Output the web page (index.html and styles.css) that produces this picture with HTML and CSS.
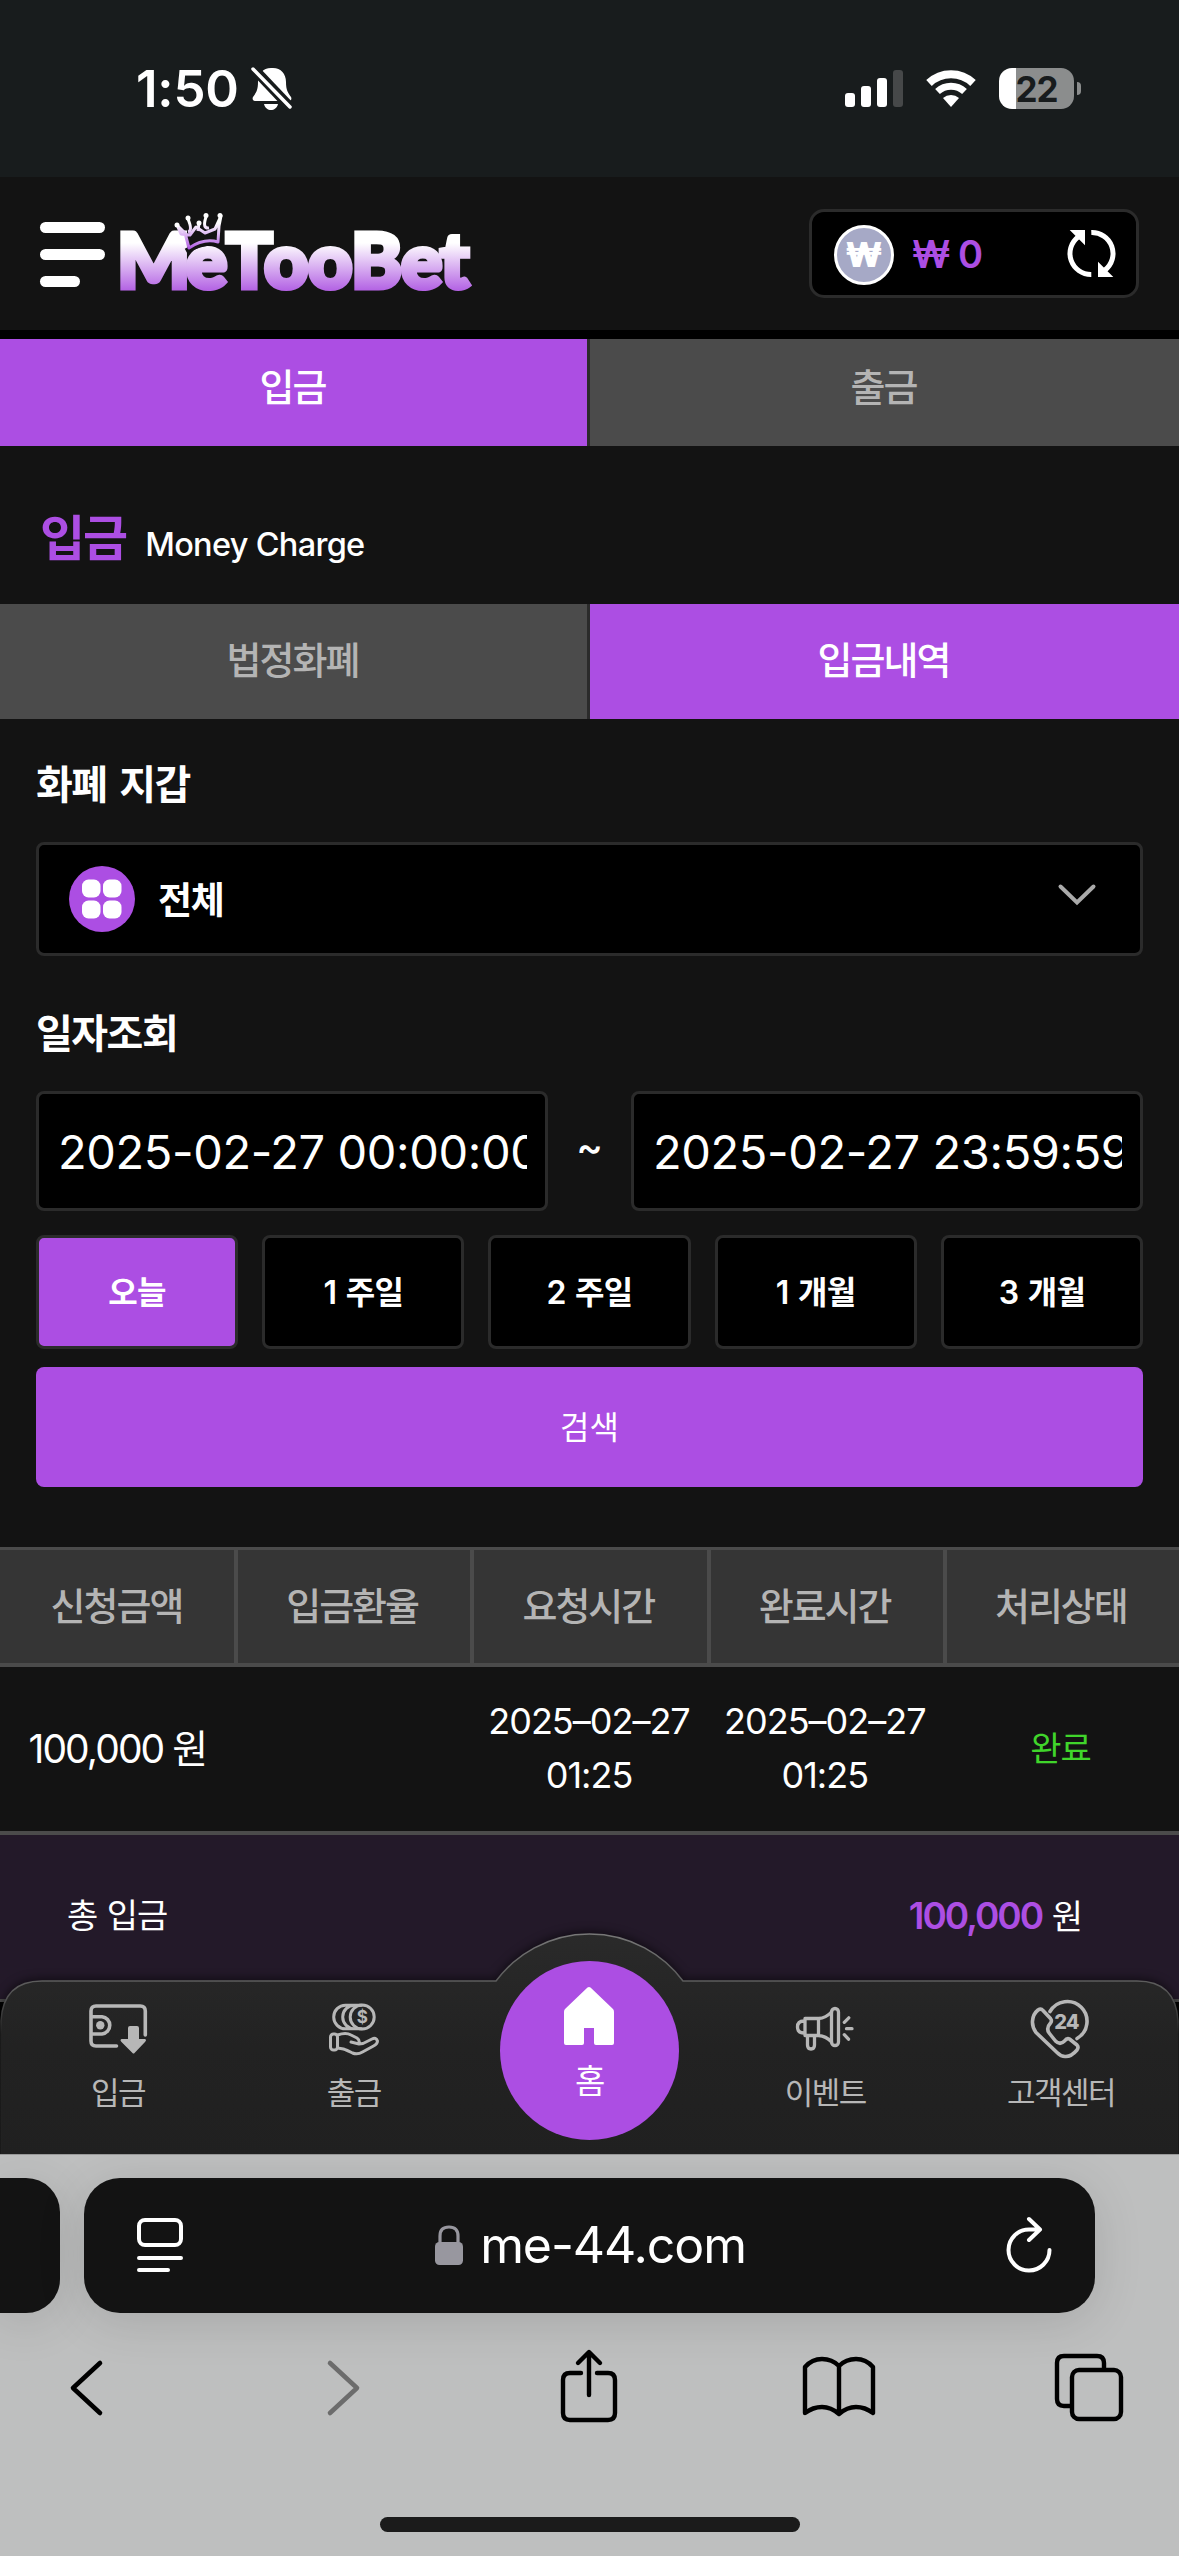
FILE: index.html
```html
<!DOCTYPE html>
<html lang="ko">
<head>
<meta charset="UTF-8">
<meta name="viewport" content="width=device-width, initial-scale=1.0">
<title>MeTooBet</title>
<link rel="stylesheet" href="styles.css">
</head>
<body>
    <div class="status-bar">
        <div class="status-left">
            <span class="clock">1:50</span>
            <svg width="42" height="46" viewBox="0 0 42 46">
                <path d="M20 3c-8 0-13 6-13 14 0 8-2 11-5 15-1 2 0 4 2 4h34c2 0 3-2 2-4-3-4-5-7-5-15 0-8-5-14-13-14zM13 39h14c-1 4-4 6-7 6s-6-2-7-6z" fill="#fff"/>
                <path d="M1 2l38 40" stroke="#181c1d" stroke-width="10"/>
                <path d="M2 4l37 38" stroke="#fff" stroke-width="3.5" stroke-linecap="round"/>
            </svg>
        </div>
        <div class="status-right">
            <svg width="58" height="38" viewBox="0 0 58 38">
                <rect x="0" y="24" width="10" height="14" rx="3" fill="#fff"/>
                <rect x="16" y="17" width="10" height="21" rx="3" fill="#fff"/>
                <rect x="32" y="9" width="10" height="29" rx="3" fill="#fff"/>
                <rect x="48" y="1" width="10" height="37" rx="3" fill="#464849"/>
            </svg>
            <svg width="52" height="38" viewBox="0 0 52 38">
                <path d="M4 14a32 32 0 0 1 44 0" fill="none" stroke="#fff" stroke-width="8"/>
                <path d="M12.500 22.500a20 20 0 0 1 27 0" fill="none" stroke="#fff" stroke-width="7"/>
                <path d="M26 38l-8-9a12 12 0 0 1 16 0z" fill="#fff"/>
            </svg>
            <div class="battery"><span>22</span></div>
            <i class="battery-tip"></i>
        </div>
    </div>

    <div class="header">
        <div class="menu"><i></i><i></i><i></i></div>
        <svg class="logo" width="360" height="100" viewBox="0 0 360 100">
            <defs>
                <linearGradient id="logoFill" gradientUnits="userSpaceOnUse" x1="0" y1="34" x2="0" y2="88">
                    <stop offset="0" stop-color="#fff"/>
                    <stop offset="1" stop-color="#a94de0"/>
                </linearGradient>
                <linearGradient id="crownFill" gradientUnits="userSpaceOnUse" x1="0" y1="14" x2="0" y2="42">
                    <stop offset="0" stop-color="#fff"/>
                    <stop offset="1" stop-color="#a94de0"/>
                </linearGradient>
            </defs>
            <text class="logo-text" x="2 71 111 149 193 236 286 325" y="79" fill="url(#logoFill)" stroke="url(#logoFill)">MeTooBet</text>
            <path d="M71 42q19-11 36-7" fill="none" stroke="#131313" stroke-width="5"/>
            <g fill="none" stroke="url(#crownFill)" stroke-width="3" stroke-linejoin="round">
                <path d="M62 16l8 8 4 15q15-10 29-6l1-16 2-10-6 13-10 4-9-6-6 8-9-1z"/>
                <path d="M73 10q5 12 0 13M91 8q-4 12 3 11M84 14l-1 8"/>
            </g>
            <g fill="#fff">
                <circle cx="62" cy="16" r="2.500"/><circle cx="73" cy="9" r="2.500"/><circle cx="84" cy="14" r="2.500"/><circle cx="91" cy="6.500" r="2.500"/><circle cx="105" cy="6.500" r="2.500"/>
            </g>
        </svg>
        <div class="balance">
            <span class="coin">₩</span>
            <span class="amount">₩ 0</span>
            <svg width="49" height="49" viewBox="0 0 49 49">
                <path d="M11 8a21 21 0 0 0 13.300 37.500M24.300 3.500A21 21 0 0 1 38 41" fill="none" stroke="#fff" stroke-width="5"/>
                <path d="M2.700 1H18v15.300zM31 32.700V48h15.300z" fill="#fff"/>
            </svg>
        </div>
    </div>

    <div class="content">
        <div class="tabs top-tabs">
            <div class="tab active">입금</div>
            <div class="tab">출금</div>
        </div>
        <div class="page-title">
            <h1>입금</h1>
            <span>Money Charge</span>
        </div>
        <div class="tabs">
            <div class="tab">법정화폐</div>
            <div class="tab active">입금내역</div>
        </div>

        <div class="search-form">
            <label class="label">화폐 지갑</label>
            <div class="select">
                <svg width="66" height="66" viewBox="0 0 66 66">
                    <circle cx="33" cy="33" r="33" fill="#ac4ee3"/>
                    <g fill="#fff"><rect x="13" y="13.500" width="18.500" height="18" rx="6.500"/><rect x="34" y="13.500" width="18.500" height="18" rx="6.500"/><rect x="13" y="34.500" width="18.500" height="18" rx="6.500"/><rect x="34" y="34.500" width="18.500" height="18" rx="6.500"/></g>
                </svg>
                <span>전체</span>
                <svg class="chevron" width="38" height="22" viewBox="0 0 38 22"><path d="M2.500 2.500L19 18.500 35.500 2.500" fill="none" stroke="#aaa" stroke-width="4" stroke-linecap="round"/></svg>
            </div>
            <label class="label date-label">일자조회</label>
            <div class="date-row">
                <input type="text" value="2025-02-27 00:00:00">
                <span>~</span>
                <input type="text" value="2025-02-27 23:59:59">
            </div>
            <div class="range-row">
                <button class="range active">오늘</button>
                <button class="range">1 주일</button>
                <button class="range">2 주일</button>
                <button class="range">1 개월</button>
                <button class="range">3 개월</button>
            </div>
            <button class="search-btn">검색</button>
        </div>

        <div class="history">
            <div class="row head">
                <div>신청금액</div><div>입금환율</div><div>요청시간</div><div>완료시간</div><div>처리상태</div>
            </div>
            <div class="row">
                <div class="money">100,000 원</div>
                <div></div>
                <div>2025–02–27<br>01:25</div>
                <div>2025–02–27<br>01:25</div>
                <div class="done">완료</div>
            </div>
            <div class="total">
                <span>총 입금</span>
                <span><b>100,000</b> 원</span>
            </div>
        </div>

        <div class="bottom-nav">
            <svg class="nav-bg" width="1179" height="230" viewBox="0 0 1179 230">
                <defs>
                    <linearGradient id="navFill" x1="0" y1="0" x2="0" y2="1">
                        <stop offset="0" stop-color="#2a2a2a"/>
                        <stop offset="0.500" stop-color="#222"/>
                        <stop offset="1" stop-color="#202020"/>
                    </linearGradient>
                    <linearGradient id="navLine" gradientUnits="userSpaceOnUse" x1="0" y1="10" x2="0" y2="110">
                        <stop offset="0" stop-color="#777"/>
                        <stop offset="0.600" stop-color="#555"/>
                        <stop offset="1" stop-color="#222"/>
                    </linearGradient>
                </defs>
                <path class="nav-shape" d="M1 235V97Q3 57 42 57H496A116.500 116.500 0 0 1 683 57H1137Q1176 57 1178 97V235z" fill="url(#navFill)" stroke="url(#navLine)" stroke-width="1.500"/>
            </svg>
            <div class="nav-items">
                <div class="nav-item">
                    <svg width="60" height="56" viewBox="0 0 60 56" fill="none" stroke="#b7b7b7" stroke-width="3.600" stroke-linecap="round">
                        <path d="M57.300 33V9q0-5-5-5H8Q3 4 3 9v30q0 5 5 5h20.500M3 14.700h11a8.700 8.700 0 0 1 0 17.300H3"/>
                        <circle cx="12.300" cy="23.300" r="4.200" fill="#b7b7b7" stroke="none"/>
                        <path d="M42 24h7q2 0 2 2v11h6q2 1 0 3L46.500 51q-1 1-2 0L33.500 40q-2-2 0-3H40V26q0-2 2-2z" fill="#b7b7b7" stroke="none"/>
                    </svg>
                    <span>입금</span>
                </div>
                <div class="nav-item">
                    <svg width="52" height="56" viewBox="0 0 52 56" fill="none" stroke="#b7b7b7" stroke-width="3" stroke-linejoin="round" stroke-linecap="round">
                        <circle cx="34.200" cy="15" r="12"/>
                        <path d="M26.500 3.200a11.800 11.800 0 0 0 0 23.600M17.500 3.200a11.800 11.800 0 0 0 0 23.600M17.500 3.200h16M17.500 26.800h16"/>
                        <rect x="2.500" y="32" width="7" height="16" rx="3"/>
                        <path d="M9.500 33Q18 30 23 33L29 36Q32 38 31 42L23 40M31 42l4-.500L44 37q4-2 5.500 2 0 3-4 5l-11 6q-5 3-10 1-6-3-9-4l-6-1"/>
                        <text x="34.200" y="21.200" class="dollar">$</text>
                    </svg>
                    <span>출금</span>
                </div>
                <div class="nav-item home">
                    <div class="home-circle">
                        <svg width="52" height="60" viewBox="0 0 52 60"><path d="M24.500 1.500q1.500-1 3 0L50 23q1 1 1 3v31q0 2-2 2H33q-2 0-2-2V42H21v15q0 2-2 2H3q-2 0-2-2V26q0-2 1-3z" fill="#fff"/></svg>
                        <span>홈</span>
                    </div>
                </div>
                <div class="nav-item">
                    <svg width="60" height="56" viewBox="0 -4 60 56" fill="none" stroke="#b7b7b7" stroke-width="3.300" stroke-linejoin="round" stroke-linecap="round">
                        <path d="M9 15Q2.500 15 2.500 21T9 27M10 12.500h13.500v17H10zM23.500 12.500Q31 12 36.500 6M23.500 29.500Q31 30 36.500 36"/>
                        <rect x="36.500" y="2.500" width="7" height="37" rx="3.500"/>
                        <path d="M12.500 30v9q0 4 3.500 4t3.500-4v-9M49.300 16.300l4.500-4.500M51.500 22.700h5.500M49.300 28.700l4.200 4.500"/>
                    </svg>
                    <span>이벤트</span>
                </div>
                <div class="nav-item support-item">
                    <svg width="58" height="60" viewBox="0 0 58 60" fill="none" stroke="#b7b7b7" stroke-width="3.600" stroke-linejoin="round" stroke-linecap="round">
                        <path d="M20 11.500a19.800 19.800 0 1 1 27 27"/>
                        <path d="M13 10.500l7.500 8q1.800 2.300 0 4.500-5 5.500-1 10.500l6 7.500q4.500 4.500 9 0 2.500-3.500 5-2l7.500 6q2 2 0 5-6 7-12 6.500-4 0-8-4L6 32.500Q2 27 2.500 21 3 14 8 10q3-2 5 .500z"/>
                        <text x="36.300" y="29" class="support">24</text>
                    </svg>
                    <span>고객센터</span>
                </div>
            </div>
        </div>
    </div>

    <div class="browser">
        <div class="url-row">
            <div class="prev-tab"></div>
            <div class="url-bar">
                <svg width="46" height="54" viewBox="0 0 46 54" fill="none" stroke="#fff" stroke-width="4" stroke-linecap="round"><rect x="2" y="2" width="42" height="25" rx="6"/><path d="M2 40h42M2 52h29"/></svg>
                <div class="host">
                    <svg width="28" height="40" viewBox="0 0 28 40"><path d="M5 20v-9q0-9 9-9t9 9v9" fill="none" stroke="#98979f" stroke-width="3.200"/><rect y="17" width="28" height="23" rx="4.500" fill="#98979f"/></svg>
                    <span>me-44.com</span>
                </div>
                <svg width="46" height="56" viewBox="0 0 46 56" fill="none" stroke="#fff" stroke-width="4" stroke-linecap="round" stroke-linejoin="round"><path d="M43.500 33A20.500 20.500 0 1 1 23 12.500h10M23 2l11 10.500L23 23"/></svg>
            </div>
        </div>
        <div class="toolbar">
            <svg width="72" height="76" viewBox="0 0 72 76" fill="none" stroke="#000" stroke-width="4.600" stroke-linecap="round" stroke-linejoin="round"><path d="M49 14L22 39l27 25"/></svg>
            <svg width="72" height="76" viewBox="0 0 72 76" fill="none" stroke="#6c6c6c" stroke-width="4.600" stroke-linecap="round" stroke-linejoin="round"><path d="M28 14l27 25-27 25"/></svg>
            <svg width="72" height="76" viewBox="-1 0 72 76" fill="none" stroke="#000" stroke-width="4.400" stroke-linecap="round" stroke-linejoin="round"><path d="M28 24H17q-7 0-7 7v33q0 7 7 7h38q7 0 7-7V31q0-7-7-7H44M36 46V4M25 14L36 3l11 11"/></svg>
            <svg width="72" height="76" viewBox="0 0 72 76" fill="none" stroke="#000" stroke-width="4.400" stroke-linecap="round" stroke-linejoin="round"><path d="M36 17Q29 10 19 10T2 18v46Q10 58 19 58t17 7q8-7 17-7t17 6V18Q63 10 53 10T36 17zv48"/></svg>
            <svg width="72" height="76" viewBox="1 0 72 76" fill="none" stroke="#000" stroke-width="4.400" stroke-linejoin="round"><path d="M52 21v-7q0-7-7-7H12q-7 0-7 7v36q0 7 7 7h8"/><rect x="20" y="21" width="49" height="49" rx="7"/></svg>
        </div>
        <div class="home-indicator"></div>
    </div>
</body>
</html>
```

FILE: styles.css
```css
* {
    box-sizing: border-box;
}

body {
    margin: 0;
    width: 1179px;
    height: 2556px;
    overflow: hidden;
    background-color: #131313;
    color: #fff;
    font-family: Inter, "Noto Sans CJK KR", sans-serif;
}

svg {
    display: block;
    flex: none;
    overflow: visible;
}

/* status bar */
.status-bar {
    display: flex;
    justify-content: space-between;
    height: 177px;
    padding: 66px 98px 0 136px;
    background-color: #181c1d;
}

.status-left,
.status-right {
    display: flex;
    align-items: center;
    height: 44px;
}

.clock {
    width: 115px;
    font-size: 51px;
    font-weight: 600;
    letter-spacing: -0.2px;
}

.status-right svg {
    margin-right: 22px;
}

.battery {
    width: 75px;
    height: 41px;
    border-radius: 13px;
    background: linear-gradient(90deg, #fff 17px, #8b8d8d 17px);
    color: #181c1d;
    font-size: 35px;
    font-weight: 700;
    line-height: 42px;
    text-align: center;
    letter-spacing: -1px;
}

.battery-tip {
    width: 4px;
    height: 13px;
    margin-left: 3px;
    border-radius: 0 6px 6px 0;
    background-color: #8b8d8d;
}

/* header */
.header {
    display: flex;
    align-items: flex-start;
    height: 162px;
    padding: 32px 40px 0;
    border-bottom: 9px solid #000;
}

.menu {
    display: flex;
    flex-direction: column;
    gap: 16px;
    width: 65px;
    margin: 13px 10px 0 0;
}

.menu i {
    height: 11px;
    border-radius: 6px;
    background-color: #fff;
}

.menu i:last-child {
    width: 40px;
}

.logo-text {
    font-family: Lato, sans-serif;
    font-size: 77px;
    font-weight: 900;
    stroke-width: 5px;
}

.balance {
    display: flex;
    align-items: center;
    width: 330px;
    height: 89px;
    margin-left: auto;
    padding: 0 20px 0 22px;
    border: 3px solid #2b2b2b;
    border-radius: 15px;
    background-color: #000;
}

.coin {
    width: 60px;
    height: 60px;
    margin-top: 3px;
    border: 3px solid #fff;
    border-radius: 50%;
    background-color: #a6a9c6;
    font-size: 34px;
    font-weight: 900;
    line-height: 54px;
    text-align: center;
}

.amount {
    flex: 1;
    margin-left: 18px;
    color: #ac4ee3;
    font-size: 38px;
    font-weight: 600;
    line-height: 82px;
    letter-spacing: -1px;
}

/* tabs */
.content {
    position: relative;
    height: 1815px;
    overflow: hidden;
}

.tabs {
    display: flex;
    height: 115px;
}

.top-tabs {
    height: 107px;
}

.tab {
    flex: 1;
    background-color: #4b4b4b;
    color: #b4b4b4;
    font-size: 38px;
    font-weight: 500;
    letter-spacing: -2px;
    line-height: 113px;
    text-align: center;
}

.top-tabs .tab {
    line-height: 97px;
}

.tab:first-child {
    flex: 0 0 590px;
    padding-right: 2px;
    border-right: 3px solid #2b2b2b;
}

.tab:last-child {
    padding-right: 2px;
}

.tab.active {
    background-color: #ac4ee3;
    color: #fff;
}

.page-title {
    display: flex;
    align-items: baseline;
    gap: 19px;
    height: 158px;
    padding: 53px 40px 0;
}

.page-title h1 {
    margin: 0;
    color: #ac4ee3;
    font-size: 49px;
    font-weight: 600;
    letter-spacing: -2px;
    line-height: 80px;
}

.page-title span {
    font-size: 32.5px;
    font-weight: 500;
    letter-spacing: -0.7px;
}

/* search form */
.search-form {
    height: 828px;
    padding: 0 36px;
}

.label {
    display: block;
    height: 123px;
    padding-top: 41px;
    font-size: 40px;
    font-weight: 600;
    letter-spacing: -1.5px;
    word-spacing: 4px;
    line-height: 50px;
}

.date-label {
    height: 135px;
    padding-top: 53px;
}

.select {
    display: flex;
    align-items: center;
    height: 114px;
    padding: 0 44px 0 30px;
    border: 3px solid #2b2b2b;
    border-radius: 8px;
    background-color: #000;
    font-size: 37px;
    font-weight: 600;
    letter-spacing: -1.2px;
}

.select span {
    flex: 1;
    margin-left: 23px;
    padding-bottom: 3px;
}

.chevron {
    margin-bottom: 9px;
}

.date-row {
    display: flex;
    align-items: center;
}

.date-row input {
    width: 512px;
    height: 120px;
    padding: 1px 18px 0 19px;
    border: 3px solid #2b2b2b;
    border-radius: 8px;
    background-color: #000;
    color: #fff;
    font-family: inherit;
    font-size: 47px;
    letter-spacing: -0.4px;
}

.date-row span {
    flex: 1;
    padding-bottom: 9px;
    font-size: 40px;
    font-weight: 500;
    text-align: center;
}

.range-row {
    display: flex;
    gap: 24px;
    margin: 24px 0 18px;
}

.range {
    flex: 1;
    height: 114px;
    padding: 0 0 4px;
    border: 3px solid #2b2b2b;
    border-radius: 8px;
    background-color: #000;
    color: #fff;
    font-family: inherit;
    font-size: 32px;
    font-weight: 600;
    letter-spacing: -0.7px;
    word-spacing: 2px;
}

.range.active {
    background-color: #ac4ee3;
}

.search-btn {
    width: 100%;
    height: 120px;
    padding: 0 0 4px;
    border: none;
    border-radius: 8px;
    background-color: #ac4ee3;
    color: #fff;
    font-family: inherit;
    font-size: 32px;
}

/* deposit history */
.row {
    display: flex;
    align-items: center;
    height: 168px;
    padding-bottom: 2px;
    border-bottom: 4px solid #4b4b4b;
    font-size: 36px;
    letter-spacing: -1px;
    line-height: 54px;
}

.row div {
    flex: 1;
    padding-right: 1px;
    text-align: center;
}

.row .money {
    padding: 2px 1px 0 0;
    font-size: 39px;
    white-space: nowrap;
    letter-spacing: -1.9px;
}

.row .done {
    padding-top: 2px;
    color: #40d52b;
    font-size: 34px;
}

.row.head {
    align-items: stretch;
    height: 120px;
    padding: 0;
    border-top: 3px solid #4b4b4b;
    background-color: #353535;
    color: #b4b4b4;
    font-size: 38px;
    font-weight: 500;
    letter-spacing: -2px;
    line-height: 113px;
}

.head div + div {
    padding-right: 4px;
    border-left: 4px solid #4b4b4b;
}

.head div:first-child {
    flex: 0 0 234px;
}

.total {
    display: flex;
    justify-content: space-between;
    height: 167px;
    padding: 0 97px 0 67px;
    border-bottom: 3px solid #4b4b4b;
    background-color: #231929;
    font-size: 34px;
    letter-spacing: -1px;
    word-spacing: 1px;
    line-height: 162px;
}

.total b {
    color: #ac4ee3;
    font-size: 37px;
    font-weight: 600;
    letter-spacing: -2px;
}

.history {
    height: 700px;
    background-color: #000;
}

.history .row:not(.head) {
    background-color: #131313;
}

/* fixed bottom navigation, lies over the page */
.bottom-nav {
    position: absolute;
    left: 0;
    bottom: 0;
    width: 100%;
    height: 230px;
}

.nav-bg {
    position: absolute;
    top: 0;
    left: 0;
}

.nav-shape {
    filter: drop-shadow(0 -2px 4px rgba(0, 0, 0, 0.5));
}

.nav-items {
    position: relative;
    display: flex;
    height: 100%;
}

.nav-item {
    flex: 1;
    display: flex;
    flex-direction: column;
    align-items: center;
    padding-top: 78px;
    color: #b7b7b7;
    font-size: 31px;
    letter-spacing: -1.5px;
    line-height: 44px;
}

.nav-item > span {
    margin-top: auto;
    margin-bottom: 39px;
}

.support-item {
    padding-top: 76px;
}

.support-item svg {
    margin-right: 4px;
}

.home {
    padding-top: 37px;
}

.home-circle {
    display: flex;
    flex-direction: column;
    align-items: center;
    width: 179px;
    height: 179px;
    padding-top: 25px;
    border-radius: 50%;
    background-color: #ac4ee3;
    color: #fff;
}

.home-circle span {
    margin-top: 13px;
    font-size: 33px;
}

.dollar,
.support {
    fill: #b7b7b7;
    stroke: none;
    font-size: 17px;
    font-weight: 700;
    letter-spacing: 0;
    text-anchor: middle;
}

.support {
    font-size: 20px;
    font-weight: 800;
    letter-spacing: -1px;
}

/* browser bars */
.browser {
    display: flex;
    flex-direction: column;
    align-items: center;
    height: 402px;
    padding-top: 23px;
    border-top: 1px solid #999;
    background-color: #bebfbf;
}

.url-row {
    display: flex;
    gap: 24px;
    width: 100%;
}

.prev-tab {
    width: 60px;
    height: 135px;
    border-radius: 0 34px 34px 0;
    background-color: #131313;
    box-shadow: 0 8px 50px rgba(0, 0, 0, 0.12);
}

.url-bar {
    display: flex;
    align-items: center;
    justify-content: space-between;
    width: 1011px;
    height: 135px;
    padding: 0 43px 2px 53px;
    border-radius: 36px;
    background-color: #131313;
    box-shadow: 0 8px 50px rgba(0, 0, 0, 0.12);
}

.host {
    display: flex;
    align-items: center;
    gap: 17px;
    margin-right: 8px;
    font-size: 50px;
    letter-spacing: -1.1px;
}

.toolbar {
    display: flex;
    justify-content: space-between;
    width: 100%;
    margin-top: 36px;
    padding: 0 54px 0 51px;
}

.home-indicator {
    width: 420px;
    height: 15px;
    margin-top: 92px;
    border-radius: 8px;
    background-color: #1b1b1b;
}
```
